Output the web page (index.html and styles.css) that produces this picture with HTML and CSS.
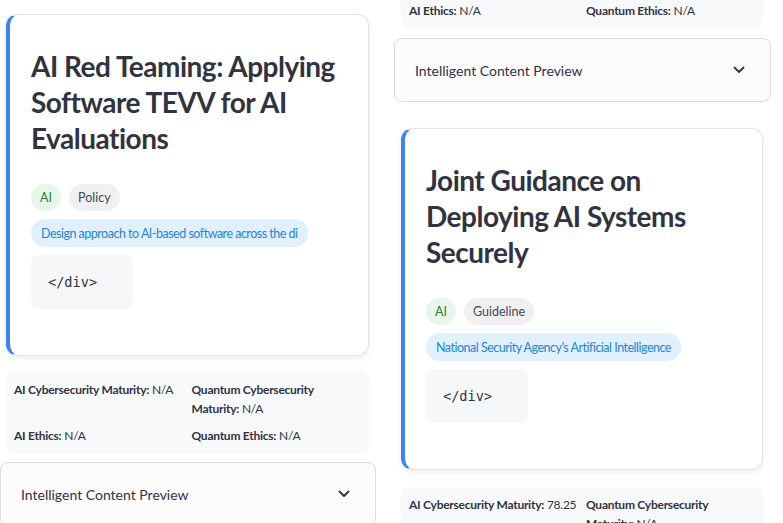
FILE: index.html
```html
<!DOCTYPE html>
<html lang="en">
<head>
<meta charset="utf-8">
<title>Documents</title>
<link rel="stylesheet" href="styles.css">
</head>
<body>
<div class="grid">
  <div class="col col-left">
    <div class="card">
      <h3 class="title">AI Red Teaming: Applying Software TEVV for AI Evaluations</h3>
      <div class="tags">
        <span class="pill pill-ai">AI</span>
        <span class="pill pill-type">Policy</span>
      </div>
      <div class="desc-row"><span class="pill pill-desc">Design approach to AI-based software across the di</span></div>
      <pre class="code">&lt;/div&gt;</pre>
    </div>
    <div class="metrics">
      <div><b>AI Cybersecurity Maturity:</b> N/A</div>
      <div><b>Quantum Cybersecurity Maturity:</b> N/A</div>
      <div><b>AI Ethics:</b> N/A</div>
      <div><b>Quantum Ethics:</b> N/A</div>
    </div>
    <div class="expander">
      <span class="exp-label">Intelligent Content Preview</span>
      <svg class="chev" width="12" height="8" viewBox="0 0 12 8"><path d="M1.5 1.5 L6 6 L10.5 1.5" fill="none" stroke="#31333f" stroke-width="1.8" stroke-linecap="round" stroke-linejoin="round"/></svg>
    </div>
  </div>
  <div class="col col-right">
    <div class="metrics">
      <div><b>AI Cybersecurity Maturity:</b> N/A</div>
      <div><b>Quantum Cybersecurity Maturity:</b> N/A</div>
      <div><b>AI Ethics:</b> N/A</div>
      <div><b>Quantum Ethics:</b> N/A</div>
    </div>
    <div class="expander">
      <span class="exp-label">Intelligent Content Preview</span>
      <svg class="chev" width="12" height="8" viewBox="0 0 12 8"><path d="M1.5 1.5 L6 6 L10.5 1.5" fill="none" stroke="#31333f" stroke-width="1.8" stroke-linecap="round" stroke-linejoin="round"/></svg>
    </div>
    <div class="card card-gap">
      <h3 class="title">Joint Guidance on Deploying AI Systems Securely</h3>
      <div class="tags">
        <span class="pill pill-ai">AI</span>
        <span class="pill pill-type">Guideline</span>
      </div>
      <div class="desc-row"><span class="pill pill-desc">National Security Agency’s Artificial Intelligence</span></div>
      <pre class="code">&lt;/div&gt;</pre>
    </div>
    <div class="metrics">
      <div><b>AI Cybersecurity Maturity:</b> 78.25</div>
      <div><b>Quantum Cybersecurity Maturity:</b> N/A</div>
      <div><b>AI Ethics:</b> N/A</div>
      <div><b>Quantum Ethics:</b> N/A</div>
    </div>
  </div>
</div>
</body>
</html>
```
FILE: styles.css
```css
html, body {
  margin: 0;
  padding: 0;
  background: #ffffff;
  overflow: hidden;
  height: 523px;
}
body {
  font-family: Lato, "Noto Sans", sans-serif;
  color: #31333f;
}
.grid {
  display: grid;
  grid-template-columns: 376px 377px;
  column-gap: 18px;
  align-items: start;
}
.col {
  display: flex;
  flex-direction: column;
}
.col-left {
  padding-top: 14px;
}
.col-right {
  margin-top: -53px;
}
.card {
  margin: 0 7px 0 6px;
  background: #fff;
  border: 1px solid #e3e3e6;
  border-left: 4px solid #3b82f6;
  border-radius: 12px;
  box-shadow: 0 2px 6px rgba(0, 0, 0, 0.08);
  padding: 33px 20px 46px 21px;
  display: flex;
  flex-direction: column;
  align-items: flex-start;
}
.col-right .card {
  margin: 0 8px 0 7px;
}
.card-gap {
  margin-top: 26px !important;
}
.title {
  margin: 0 0 28px 0;
  font-size: 28px;
  line-height: 36px;
  font-weight: 700;
  color: #31333f;
  letter-spacing: -0.5px;
}
.tags {
  display: flex;
  gap: 8px;
}
.pill {
  display: inline-flex;
  align-items: center;
  height: 27px;
  padding: 0 9px;
  border-radius: 14px;
  font-size: 12.5px;
  white-space: nowrap;
}
.pill-ai {
  background: #e8f5e9;
  color: #2e7d32;
}
.pill-type {
  background: #f0f0f0;
  color: #444a55;
}
.desc-row {
  margin-top: 8px;
}
.pill-desc {
  height: 28px;
  background: #e1f0fd;
  color: #2485d6;
  padding: 0 10px;
  letter-spacing: -0.5px;
}
.code {
  margin: 8px 0 0 0;
  background: #f6f7f9;
  border-radius: 8px;
  padding: 16px 36px 16px 17px;
  font-family: "DejaVu Sans Mono", "Liberation Mono", monospace;
  font-size: 13.6px;
  line-height: 22px;
  color: #31333f;
}
.metrics {
  margin: 16px 7px 0 6px;
  background: #f8f9fb;
  border-radius: 8px;
  padding: 8px;
  display: grid;
  grid-template-columns: 1fr 1fr;
  gap: 8px;
  font-size: 12px;
  line-height: 19px;
  letter-spacing: -0.25px;
  color: #31333f;
}
.metrics b {
  font-weight: 700;
}
.col-right .metrics {
  margin: 17px 8px 0 7px;
}
.col-right .metrics:first-child {
  margin-top: 0;
}
.expander {
  margin-top: 9px;
  height: 64px;
  box-sizing: border-box;
  border: 1px solid #dcdce0;
  border-radius: 8px;
  background: #fcfcfd;
  display: flex;
  align-items: center;
  justify-content: space-between;
  padding: 0 25px 0 20px;
}
.col-right .expander {
  margin-top: 10px;
}
.exp-label {
  font-size: 14px;
  color: #31333f;
}
.chev {
  display: block;
}
```
